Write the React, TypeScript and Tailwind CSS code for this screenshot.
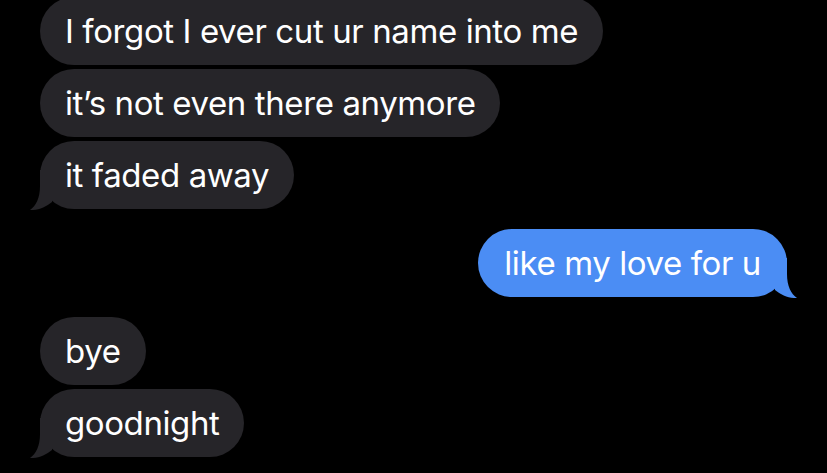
import type { ReactNode } from 'react'

type Side = 'left' | 'right'

// little curled tail under the last bubble of a group
function Tail({ side, color }: { side: Side; color: string }) {
  return (
    <svg
      width="30"
      height="40"
      viewBox="0 0 30 40"
      className={
        side === 'left'
          ? 'absolute left-[-10px] bottom-[-1px]'
          : 'absolute right-[-10px] bottom-[-1px] -scale-x-100'
      }
    >
      <path d="M10 0 L10 16 C10 28 6 36 0 40 C8 40.5 16 37 22 32 L22 0 Z" fill={color} />
    </svg>
  )
}

function Bubble({
  children,
  side = 'left',
  tail = false,
}: {
  children: ReactNode
  side?: Side
  tail?: boolean
}) {
  const color = side === 'left' ? '#262529' : '#4b8df4'
  return (
    <div
      className={
        side === 'left'
          ? 'relative h-[68px] rounded-[34px] px-[25px] flex items-center bg-[#262529] text-white'
          : 'relative h-[68px] rounded-[34px] px-[26px] flex items-center bg-[#4b8df4] text-white'
      }
    >
      {tail && <Tail side={side} color={color} />}
      <span className="relative text-[33px] leading-none tracking-[-0.4px] whitespace-nowrap">
        {children}
      </span>
    </div>
  )
}

export default function App() {
  return (
    <div
      className="min-h-screen h-[473px] bg-black overflow-hidden"
      style={{ fontFamily: 'Inter, "Noto Sans", sans-serif' }}
    >
      <div className="flex flex-col px-[40px] -mt-[3px]">
        <div className="flex flex-col items-start gap-1">
          <Bubble>I forgot I ever cut ur name into me</Bubble>
          <Bubble>it’s not even there anymore</Bubble>
          <Bubble tail>it faded away</Bubble>
        </div>

        <div className="flex flex-col items-end mt-5">
          <Bubble side="right" tail>
            like my love for u
          </Bubble>
        </div>

        <div className="flex flex-col items-start gap-1 mt-5">
          <Bubble>bye</Bubble>
          <Bubble tail>goodnight</Bubble>
        </div>
      </div>
    </div>
  )
}
